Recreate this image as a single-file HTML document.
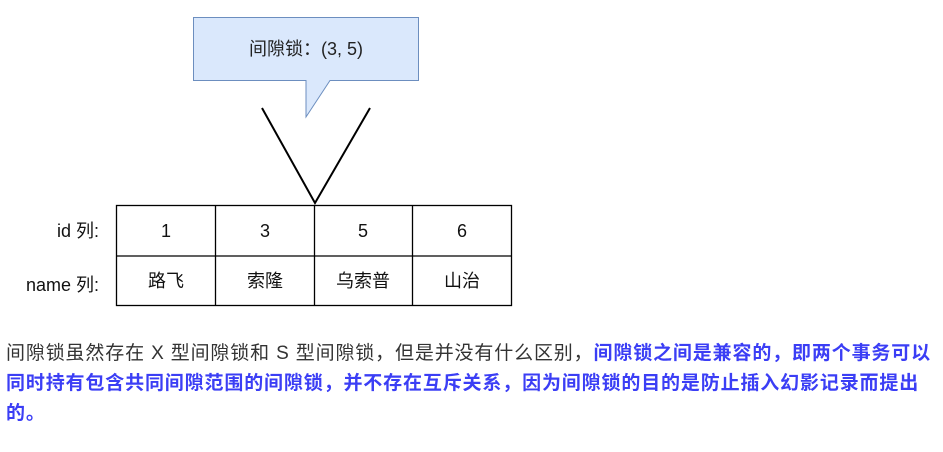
<!DOCTYPE html>
<html><head><meta charset="utf-8"><style>
body{margin:0;background:#fff;width:943px;height:452px;overflow:hidden;position:relative}
svg{position:absolute;left:0;top:0}
.p{position:absolute;left:6px;top:339px;width:940px;white-space:nowrap;font-family:"Liberation Sans","Noto Sans CJK SC",sans-serif;font-size:19px;letter-spacing:0.85px;line-height:30px;color:#333}
.b{color:#3b3ef5;font-weight:bold}
</style></head><body>
<svg width="943" height="330" font-family="Liberation Sans, Noto Sans CJK SC, sans-serif">
<path d="M193.5 17.5 H418.5 V80.5 H330 L306 117 V80.5 H193.5 Z" fill="#dae8fc" stroke="#6c8ebf"/>
<text x="306" y="55" font-size="18" text-anchor="middle" fill="#222">间隙锁：(3, 5)</text>
<path d="M262 108 L315 203 L370 108" fill="none" stroke="#000" stroke-width="2"/>
<g stroke="#000" stroke-width="1.3" fill="none">
<rect x="116.5" y="205.5" width="395" height="100"/>
<line x1="116" y1="256" x2="511" y2="256"/>
<line x1="215.5" y1="205" x2="215.5" y2="305"/>
<line x1="314.5" y1="205" x2="314.5" y2="305"/>
<line x1="412.5" y1="205" x2="412.5" y2="305"/>
</g>
<g font-size="18" fill="#111" text-anchor="middle">
<text x="166" y="237">1</text><text x="265" y="237">3</text><text x="363" y="237">5</text><text x="462" y="237">6</text>
<text x="166" y="287">路飞</text><text x="265" y="287">索隆</text><text x="363" y="287">乌索普</text><text x="462" y="287">山治</text>
</g>
<g font-size="18" fill="#111" text-anchor="end">
<text x="99" y="237">id 列:</text><text x="99" y="291">name 列:</text>
</g>
</svg>
<div class="p">间隙锁虽然存在 X 型间隙锁和 S 型间隙锁，但是并没有什么区别，<span class="b">间隙锁之间是兼容的，即两个事务可以<br>同时持有包含共同间隙范围的间隙锁，并不存在互斥关系，因为间隙锁的目的是防止插入幻影记录而提出<br>的。</span></div>
</body></html>
